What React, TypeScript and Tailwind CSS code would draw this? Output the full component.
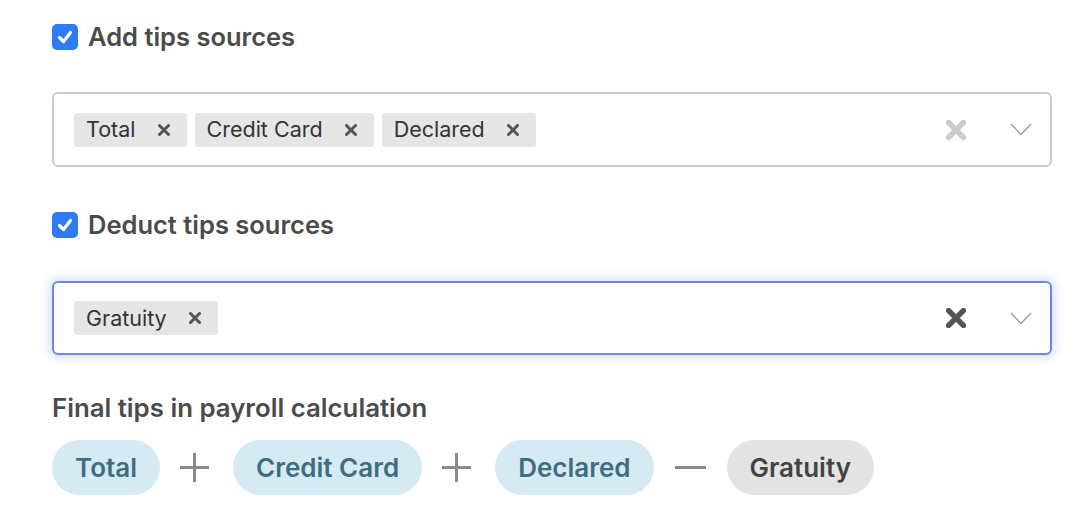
import React from "react"

const font = { fontFamily: "Inter, 'Open Sans', sans-serif" }

function Check() {
  return (
    <span className="flex h-[26px] w-[26px] items-center justify-center rounded-[5px] bg-[#2f7bf6]">
      <svg width="18" height="18" viewBox="0 0 18 18">
        <path d="M3.5 9.5 L7.5 13.5 L14.5 4.5" fill="none" stroke="white" strokeWidth="3.2" strokeLinecap="round" strokeLinejoin="round" />
      </svg>
    </span>
  )
}

function Cross({ size = 12, color = "#555", width = 3 }: { size?: number; color?: string; width?: number }) {
  return (
    <svg width={size} height={size} viewBox="0 0 12 12">
      <path d="M1.5 1.5 L10.5 10.5 M10.5 1.5 L1.5 10.5" stroke={color} strokeWidth={width} strokeLinecap="round" />
    </svg>
  )
}

function Chevron() {
  return (
    <svg width="22" height="13" viewBox="0 0 22 13">
      <path d="M1 1 L11 11.5 L21 1" fill="none" stroke="#9a9a9a" strokeWidth="1.3" />
    </svg>
  )
}

function Tag({ label }: { label: string }) {
  return (
    <span className="flex h-[34px] items-center gap-[22px] rounded-[3px] bg-[#e6e6e6] pl-[12px] pr-[17px] text-[21.5px] text-[#333]">
      {label}
      <Cross />
    </span>
  )
}

function MultiSelect({ tags, focused }: { tags: string[]; focused?: boolean }) {
  return (
    <div
      className={
        focused
          ? "flex h-[74px] w-[1000px] items-center rounded-[6px] border-2 border-[#6f88dd] bg-white pl-[20px] pr-[18px] shadow-[0_0_10px_3px_rgba(110,130,230,0.25)]"
          : "flex h-[75px] w-[1000px] items-center rounded-[6px] border-2 border-[#cacaca] bg-white pl-[20px] pr-[18px]"
      }
    >
      <div className="flex flex-1 gap-[8px]">
        {tags.map((t) => (
          <Tag key={t} label={t} />
        ))}
      </div>
      <span className="mr-[44px]">
        <Cross size={20} color={focused ? "#555" : "#cbcbcb"} width={3.2} />
      </span>
      <Chevron />
    </div>
  )
}

function Pill({ label, gray }: { label: string; gray?: boolean }) {
  return (
    <span
      className={
        gray
          ? "flex h-[55px] items-center rounded-full bg-[#e3e3e3] px-[23px] text-[26px] font-semibold text-[#434343]"
          : "flex h-[55px] items-center rounded-full bg-[#d5eaf2] px-[23px] text-[26px] font-semibold text-[#3f6d80]"
      }
    >
      {label}
    </span>
  )
}

function Plus() {
  return (
    <svg width="31" height="31" viewBox="0 0 31 31">
      <path d="M15.5 1 V30 M1 15.5 H30" stroke="#8a8a8a" strokeWidth="3" />
    </svg>
  )
}

function Minus() {
  return (
    <svg width="31" height="31" viewBox="0 0 31 31">
      <path d="M0 15.5 H31" stroke="#8a8a8a" strokeWidth="3" />
    </svg>
  )
}

export default function App() {
  return (
    <div className="h-[526px] w-[1090px] bg-white pl-[52px] pt-[24px]" style={font}>
      <div className="flex h-[26px] items-center gap-[10px]">
        <Check />
        <span className="text-[25.5px] font-semibold text-[#4b4b4b]">Add tips sources</span>
      </div>

      <div className="mt-[42px]">
        <MultiSelect tags={["Total", "Credit Card", "Declared"]} />
      </div>

      <div className="mt-[45px] flex h-[26px] items-center gap-[10px]">
        <Check />
        <span className="text-[25.5px] font-semibold text-[#4b4b4b]">Deduct tips sources</span>
      </div>

      <div className="mt-[43px]">
        <MultiSelect tags={["Gratuity"]} focused />
      </div>

      <div className="mt-[38px] text-[25.8px] leading-[30px] font-semibold text-[#4b4b4b]">
        Final tips in payroll calculation
      </div>

      <div className="mt-[17px] flex items-center">
        <Pill label="Total" />
        <span className="ml-[19px] mr-[23px]"><Plus /></span>
        <Pill label="Credit Card" />
        <span className="ml-[19px] mr-[23px]"><Plus /></span>
        <Pill label="Declared" />
        <span className="ml-[21px] mr-[21px]"><Minus /></span>
        <Pill label="Gratuity" gray />
      </div>
    </div>
  )
}
